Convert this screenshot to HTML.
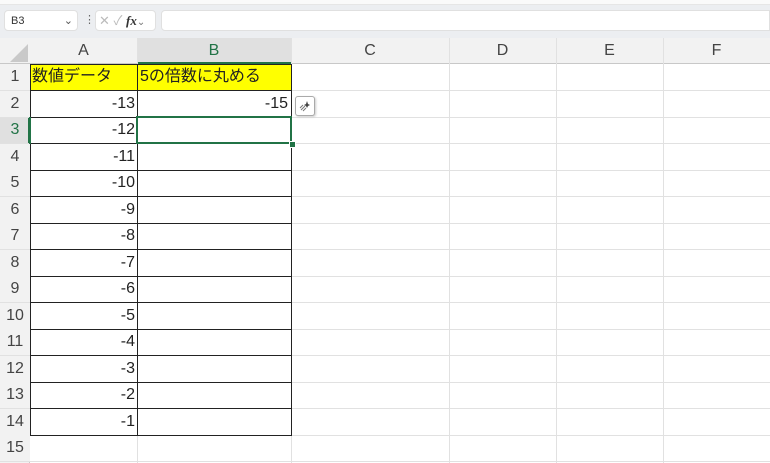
<!DOCTYPE html><html><head><meta charset="utf-8"><style>
body{margin:0;width:770px;height:463px;overflow:hidden;background:#fff;font-family:"Liberation Sans","Noto Sans CJK JP",sans-serif;position:relative}
.a{position:absolute}
.hl{position:absolute;left:0;width:770px;height:1px;background:#e1e1e1}
.vl{position:absolute;top:38px;width:1px;height:425px;background:#e1e1e1}
.rh{position:absolute;left:0;width:30px;text-align:center;font-size:16px;color:#444;line-height:26px;background:#f2f2f2}
.n{position:absolute;left:30px;width:105px;text-align:right;font-size:16px;color:#222;line-height:26px}
.ch{position:absolute;top:38px;height:26px;line-height:26px;text-align:center;font-size:16px;color:#444}
</style></head><body>
<div class="a" style="left:0;top:0;width:770px;height:4px;background:#fafafa;border-bottom:1px solid #e6e6e6"></div>
<div class="a" style="left:0;top:5px;width:770px;height:33px;background:#eceef1"></div>
<div class="a" style="left:4px;top:10px;width:74px;height:21px;background:#fff;border-radius:4px;border:1px solid #e0e0e0;font-size:11px;line-height:21px;color:#333;padding-left:6px;box-sizing:border-box">B3<span style="position:absolute;right:4px;color:#555">&#8964;</span></div>
<div class="a" style="left:84px;top:13px;font-size:11px;color:#666">⋮</div>
<div class="a" style="left:95px;top:10px;width:61px;height:21px;background:#fff;border-radius:4px;border:1px solid #e0e0e0;box-sizing:border-box;font-size:13px;line-height:20px;color:#bbb;padding-left:3px">✕ ✓ <i style="color:#333;font-family:'Liberation Serif',serif;font-weight:bold">fx</i><span style="color:#777;font-size:10px">⌄</span></div>
<div class="a" style="left:161px;top:10px;width:609px;height:21px;background:#fff;border-radius:4px 0 0 4px;border:1px solid #e0e0e0;box-sizing:border-box"></div>
<div class="a" style="left:0;top:38px;width:770px;height:26px;background:#f2f2f2;border-bottom:1px solid #c8c8c8;box-sizing:border-box"></div>
<div class="a" style="left:137px;top:38px;width:154px;height:26px;background:#e0e0e0;border-bottom:2px solid #217346;box-sizing:border-box"></div>
<div class="a" style="left:0;top:64px;width:30px;height:399px;background:#f2f2f2;border-right:1px solid #c8c8c8;box-sizing:border-box"></div>
<div class="a" style="left:0;top:117px;width:30px;height:26.5px;background:#e0e0e0;border-right:2px solid #217346;box-sizing:border-box"></div>
<svg class="a" style="left:8px;top:44px" width="20" height="18"><polygon points="20,0 20,18 2,18" fill="#c9c9c9"/></svg>
<div class="ch" style="left:30px;width:107px">A</div>
<div class="ch" style="left:137px;width:154px;color:#217346">B</div>
<div class="ch" style="left:291px;width:158px">C</div>
<div class="ch" style="left:449px;width:107px">D</div>
<div class="ch" style="left:556px;width:107px">E</div>
<div class="ch" style="left:663px;width:107px">F</div>
<div class="vl" style="left:137px"></div><div class="vl" style="left:291px"></div><div class="vl" style="left:449px"></div><div class="vl" style="left:556px"></div><div class="vl" style="left:663px"></div>
<div class="hl" style="top:90px"></div><div class="hl" style="top:117px"></div><div class="hl" style="top:143px"></div><div class="hl" style="top:170px"></div><div class="hl" style="top:196px"></div><div class="hl" style="top:223px"></div><div class="hl" style="top:249px"></div><div class="hl" style="top:276px"></div><div class="hl" style="top:302px"></div><div class="hl" style="top:329px"></div><div class="hl" style="top:355px"></div><div class="hl" style="top:382px"></div><div class="hl" style="top:408px"></div><div class="hl" style="top:435px"></div><div class="hl" style="top:461px"></div>
<div class="a" style="left:30px;top:64px;width:261px;height:26px;background:#ffff00"></div>
<div class="a" style="left:30px;top:64px;width:262px;height:372px;border:1px solid #222;box-sizing:border-box"></div>
<div class="a" style="left:137px;top:64px;width:1px;height:372px;background:#222"></div>
<div class="a" style="left:30px;top:90px;width:262px;height:1px;background:#222"></div>
<div class="a" style="left:30px;top:143px;width:262px;height:1px;background:#222"></div><div class="a" style="left:30px;top:170px;width:262px;height:1px;background:#222"></div><div class="a" style="left:30px;top:196px;width:262px;height:1px;background:#222"></div><div class="a" style="left:30px;top:223px;width:262px;height:1px;background:#222"></div><div class="a" style="left:30px;top:249px;width:262px;height:1px;background:#222"></div><div class="a" style="left:30px;top:276px;width:262px;height:1px;background:#222"></div><div class="a" style="left:30px;top:302px;width:262px;height:1px;background:#222"></div><div class="a" style="left:30px;top:329px;width:262px;height:1px;background:#222"></div><div class="a" style="left:30px;top:355px;width:262px;height:1px;background:#222"></div><div class="a" style="left:30px;top:382px;width:262px;height:1px;background:#222"></div><div class="a" style="left:30px;top:408px;width:262px;height:1px;background:#222"></div>
<div class="a" style="left:30px;top:117px;width:262px;height:1px;background:#222"></div>
<div class="a" style="left:29px;top:117px;width:2px;height:27px;background:#217346"></div>
<div class="a" style="left:136px;top:116px;width:156px;height:28px;border:2px solid #217346;box-sizing:border-box"></div>
<div class="a" style="left:289px;top:141px;width:5px;height:5px;background:#217346;border:1px solid #fff"></div>
<div class="a" style="left:32px;top:64px;font-size:16px;line-height:26px;color:#222">数値データ</div>
<div class="a" style="left:140px;top:64px;font-size:16px;line-height:26px;color:#222">5の倍数に丸める</div>
<div class="a" style="left:137px;top:90px;width:151px;text-align:right;font-size:16px;line-height:27px;color:#222">-15</div>
<div class="a" style="left:295px;top:96px;width:18px;height:18px;border:1px solid #aaa;border-radius:3px;background:#fff;box-shadow:1px 1px 2px #ccc"><svg width="18" height="18"><path d="M5 13 L9 9 M7 14 L10 11 M4 11 L7 8" stroke="#777" stroke-width="1"/><path d="M11 4 L12 7 L14 8 L12 9 L11 11 L10 9 L8 8 L10 7Z" fill="#444"/></svg></div>
<div class="rh" style="top:64px">1</div><div class="rh" style="top:90.5px">2</div><div class="rh" style="top:117px;background:none;color:#217346">3</div><div class="rh" style="top:143.5px">4</div><div class="rh" style="top:170px">5</div><div class="rh" style="top:196.5px">6</div><div class="rh" style="top:223px">7</div><div class="rh" style="top:249.5px">8</div><div class="rh" style="top:276px">9</div><div class="rh" style="top:302.5px">10</div><div class="rh" style="top:329px">11</div><div class="rh" style="top:355.5px">12</div><div class="rh" style="top:382px">13</div><div class="rh" style="top:408.5px">14</div><div class="rh" style="top:435px">15</div>
<div class="n" style="top:90.5px">-13</div><div class="n" style="top:117px">-12</div><div class="n" style="top:143.5px">-11</div><div class="n" style="top:170px">-10</div><div class="n" style="top:196.5px">-9</div><div class="n" style="top:223px">-8</div><div class="n" style="top:249.5px">-7</div><div class="n" style="top:276px">-6</div><div class="n" style="top:302.5px">-5</div><div class="n" style="top:329px">-4</div><div class="n" style="top:355.5px">-3</div><div class="n" style="top:382px">-2</div><div class="n" style="top:408.5px">-1</div>
</body></html>
